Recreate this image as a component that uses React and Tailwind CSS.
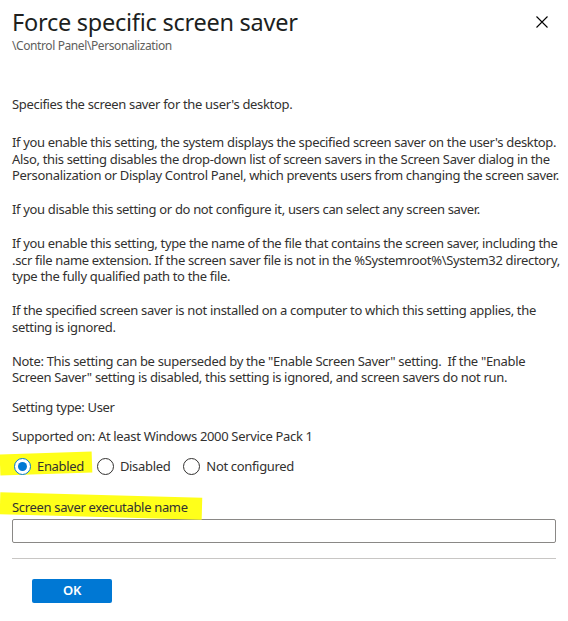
import React, { useState } from 'react'

const Radio = ({ label, checked, onClick }) => (
  <label onClick={onClick} className='flex items-center gap-[6px] cursor-pointer'>
    <span className={`w-[17px] h-[17px] rounded-full border flex items-center justify-center bg-white ${checked ? 'border-[#0078d4]' : 'border-[#323130]'}`}>
      {checked && <span className='w-[9px] h-[9px] rounded-full bg-[#0078d4]'></span>}
    </span>
    <span>{label}</span>
  </label>
)

const App = () => {
  const [state, setState] = useState('enabled')

  return (
    <div className="w-[568px] h-[621px] bg-white text-[#323130] text-[13px] leading-[16.5px] font-['Segoe_UI','Noto_Sans',sans-serif] overflow-hidden">
      <div className='flex justify-between items-start pl-3 pr-[20px] pt-[6px]'>
        <div>
          <h1 className='text-[23.5px] leading-[32px] font-normal text-[#201f1e] tracking-[-0.25px]'>Force specific screen saver</h1>
          <div className='text-[12px] leading-[14px] text-[#605e5c] mt-[1px] tracking-[-0.4px]'>\Control Panel\Personalization</div>
        </div>
        <button className='mt-[10px] text-black'>
          <svg width="12" height="12" viewBox="0 0 12 12" fill="none" stroke="currentColor" strokeWidth="1.1">
            <path d="M0.5 0.5 L11.5 11.5 M11.5 0.5 L0.5 11.5" />
          </svg>
        </button>
      </div>

      <div className='px-3 pt-[43px] flex flex-col gap-[17.5px] tracking-[-0.33px] whitespace-nowrap'>
        <p className='mb-[4px]'>Specifies the screen saver for the user's desktop.</p>
        <p>
          If you enable this setting, the system displays the specified screen saver on the user's desktop.<br />
          Also, this setting disables the drop-down list of screen savers in the Screen Saver dialog in the<br />
          Personalization or Display Control Panel, which prevents users from changing the screen saver.
        </p>
        <p>If you disable this setting or do not configure it, users can select any screen saver.</p>
        <p>
          If you enable this setting, type the name of the file that contains the screen saver, including the<br />
          .scr file name extension. If the screen saver file is not in the %Systemroot%\System32 directory,<br />
          type the fully qualified path to the file.
        </p>
        <p>
          If the specified screen saver is not installed on a computer to which this setting applies, the<br />
          setting is ignored.
        </p>
        <p>
          Note: This setting can be superseded by the "Enable Screen Saver" setting.&nbsp; If the "Enable<br />
          Screen Saver" setting is disabled, this setting is ignored, and screen savers do not run.
        </p>
      </div>

      <div className='px-3 tracking-[-0.33px]'>
        <p className='mt-[13px]'>Setting type: User</p>
        <p className='mt-[13px]'>Supported on: At least Windows 2000 Service Pack 1</p>

        <div className='relative mt-[13px]'>
          <span className='absolute -left-3 top-[-5px] w-[92px] h-[21px] bg-[#ffff1a] -rotate-[2deg]'></span>
          <div className='relative flex items-center gap-[13px] pl-[2px]'>
            <Radio label='Enabled' checked={state === 'enabled'} onClick={() => setState('enabled')} />
            <Radio label='Disabled' checked={state === 'disabled'} onClick={() => setState('disabled')} />
            <Radio label='Not configured' checked={state === 'not'} onClick={() => setState('not')} />
          </div>
        </div>

        <div className='relative mt-[24px]'>
          <span className='absolute -left-3 top-[-4px] w-[202px] h-[22px] bg-[#ffff1a] rotate-[1.5deg]'></span>
          <label className='relative block leading-[16px]'>Screen saver executable name</label>
        </div>
        <input type='text' className='mt-[4px] block w-full h-[24px] border border-[#8a8886] rounded-[2px] px-2 outline-none' />
        <div className='mt-[15px] border-t border-[#c8c6c4]'></div>
        <button className='mt-[20px] ml-[20px] w-[80px] h-[24px] bg-[#0078d4] text-white font-semibold rounded-[2px] text-[13px]'>OK</button>
      </div>
    </div>
  )
}

export default App
